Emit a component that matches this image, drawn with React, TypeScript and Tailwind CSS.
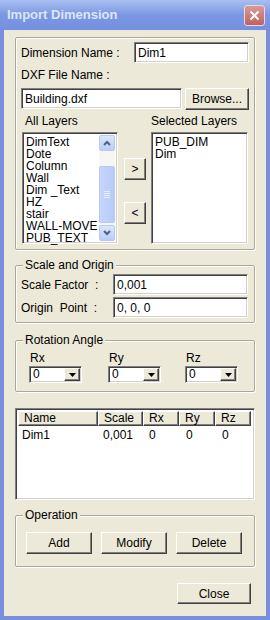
import React from 'react';

const sunken =
  'border border-t-[#808080] border-l-[#808080] border-r-white border-b-white shadow-[inset_1px_1px_0_#404040,inset_-1px_-1px_0_#d4d0c8] bg-white';
const raised =
  'border border-t-white border-l-white border-r-[#404040] border-b-[#404040] shadow-[inset_-1px_-1px_0_#808080] bg-[#ECE9D8]';
const etched =
  'relative rounded-[2px] border border-[#ACA899] shadow-[inset_1px_1px_0_#ffffff,1px_1px_0_#ffffff]';

const allLayers = ['DimText', 'Dote', 'Column', 'Wall', 'Dim _Text', 'HZ', 'stair', 'WALL-MOVE', 'PUB_TEXT'];
const selectedLayers = ['PUB_DIM', 'Dim'];

function Legend({ text }: { text: string }) {
  return (
    <span className="absolute left-[7px] top-[-8px] bg-[#ECE9D8] px-[2px] text-[12px] leading-[14px]">{text}</span>
  );
}

function Button({ label, className }: { label: string; className: string }) {
  return (
    <div className={`${raised} flex items-center justify-center text-[12px] ${className}`}>{label}</div>
  );
}

function Combo() {
  return (
    <div className={`${sunken} flex h-[17px] w-[53px] items-stretch p-[1px]`}>
      <span className="flex-1 pl-[2px] text-[12px] leading-[13px]">0</span>
      <div className={`${raised} flex w-[16px] items-center justify-center`}>
        <svg width="7" height="4" viewBox="0 0 7 4">
          <path d="M0 0h7L3.5 4z" fill="#000" />
        </svg>
      </div>
    </div>
  );
}

function ScrollArrow({ up }: { up?: boolean }) {
  return (
    <div className="flex h-[16px] items-center justify-center rounded-[2px] border border-[#B8CAF2] bg-gradient-to-b from-[#DCE6FD] to-[#B9CDF8]">
      <svg width="8" height="6" viewBox="0 0 8 6">
        <path d={up ? 'M1 5l3-3 3 3' : 'M1 1l3 3 3-3'} stroke="#4D6185" strokeWidth="2" fill="none" />
      </svg>
    </div>
  );
}

export default function App() {
  return (
    <div
      className="flex h-[620px] w-[270px] flex-col bg-[#7A8FDC] text-black"
      style={{ fontFamily: '"Liberation Sans", Arial, sans-serif' }}
    >
      {/* title bar */}
      <div className="flex h-[30px] items-center justify-between bg-gradient-to-b from-[#A9BFF1] via-[#7C97E2] to-[#7490E0] pl-[7px] pr-[5px]">
        <span className="text-[13px] font-bold text-[#DCE6F8]">Import Dimension</span>
        <div className="flex h-[21px] w-[21px] items-center justify-center rounded-[3px] border border-[#E8D8E4] bg-gradient-to-b from-[#D99A9A] to-[#C0605E]">
          <svg width="11" height="11" viewBox="0 0 11 11">
            <path d="M1.5 1.5l8 8M9.5 1.5l-8 8" stroke="#fff" strokeWidth="2" />
          </svg>
        </div>
      </div>

      <div className="mx-[4px] mb-[4px] flex flex-1 flex-col bg-[#ECE9D8] px-[11px] pt-[7px]">
        {/* file & layers */}
        <div className={`${etched} h-[213px] px-[5px] pt-[4px]`}>
          <div className="flex h-[21px] items-center">
            <span className="text-[12px]">Dimension Name :</span>
            <div className={`${sunken} ml-auto flex h-[21px] w-[115px] items-center px-[3px] text-[12px]`}>Dim1</div>
          </div>
          <div className="mt-[5px] h-[14px] text-[12px] leading-[14px]">DXF File Name :</div>
          <div className="mt-[6px] flex h-[22px] items-start gap-[3px]">
            <div className={`${sunken} flex h-[21px] w-[161px] items-center px-[3px] text-[12px]`}>Building.dxf</div>
            <Button label="Browse..." className="h-[22px] w-[64px]" />
          </div>
          <div className="mt-[4px] flex h-[14px] text-[12px] leading-[14px]">
            <span className="w-[130px] pl-[4px]">All Layers</span>
            <span>Selected Layers</span>
          </div>
          <div className="ml-[1px] mt-[4px] flex h-[112px]">
            <div className={`${sunken} flex w-[96px] p-[2px]`}>
              <div className="flex-1 pl-[1px] pt-[1px] text-[12px] leading-[12px]">
                {allLayers.map((l) => (
                  <div key={l} className="whitespace-nowrap">{l}</div>
                ))}
              </div>
              <div className="flex w-[16px] flex-col bg-[#F7F6F0]">
                <ScrollArrow up />
                <div className="flex flex-1 flex-col pt-[15px] pb-[2px]">
                  <div className="flex flex-1 items-center justify-center rounded-[2px] border border-[#B8CAF2] bg-gradient-to-r from-[#C6D5FB] to-[#B8CBF7]">
                    <div className="flex flex-col gap-[1px]">
                      <div className="h-[1px] w-[6px] bg-[#E8EEFD]" />
                      <div className="h-[1px] w-[6px] bg-[#E8EEFD]" />
                      <div className="h-[1px] w-[6px] bg-[#E8EEFD]" />
                      <div className="h-[1px] w-[6px] bg-[#E8EEFD]" />
                    </div>
                  </div>
                </div>
                <ScrollArrow />
              </div>
            </div>
            <div className="ml-[6px] flex w-[22px] flex-col pt-[26px]">
              <Button label=">" className="h-[22px] w-[22px]" />
              <Button label="<" className="mt-[22px] h-[22px] w-[22px]" />
            </div>
            <div className={`${sunken} ml-[5px] w-[97px] px-[3px] pt-[3px] text-[12px] leading-[12px]`}>
              {selectedLayers.map((l) => (
                <div key={l}>{l}</div>
              ))}
            </div>
          </div>
        </div>

        {/* scale and origin */}
        <div className={`${etched} mt-[15px] h-[58px] pl-[5px] pr-[6px] pt-[8px]`}>
          <Legend text="Scale and Origin" />
          <div className="flex h-[21px] items-center">
            <span className="text-[12px]">Scale Factor&nbsp; :</span>
            <div className={`${sunken} ml-auto flex h-[21px] w-[135px] items-center px-[3px] text-[12px]`}>0,001</div>
          </div>
          <div className="mt-[2px] flex h-[21px] items-center">
            <span className="whitespace-pre text-[12px]">Origin  Point  :</span>
            <div className={`${sunken} ml-auto flex h-[21px] w-[135px] items-center px-[3px] text-[12px]`}>0, 0, 0</div>
          </div>
        </div>

        {/* rotation */}
        <div className={`${etched} mt-[17px] flex h-[52px] pl-[13px] pt-[10px]`}>
          <Legend text="Rotation Angle" />
          {['Rx', 'Ry', 'Rz'].map((r, i) => (
            <div key={r} className={`flex flex-col ${i === 0 ? '' : i === 1 ? 'ml-[26px]' : 'ml-[24px]'}`}>
              <span className="h-[14px] pl-[1px] text-[12px] leading-[14px]">{r}</span>
              <div className="mt-[1px]">
                <Combo />
              </div>
            </div>
          ))}
        </div>

        {/* list view */}
        <div className={`${sunken} mt-[16px] h-[92px] w-[240px] p-[2px] text-[12px]`}>
          <div className="flex h-[15px] leading-[13px]">
            {[
              ['Name', 'w-[80px]'],
              ['Scale', 'w-[45px]'],
              ['Rx', 'w-[36px]'],
              ['Ry', 'w-[36px]'],
              ['Rz', 'w-[36px]'],
            ].map(([h, w]) => (
              <div key={h} className={`${raised} ${w} pl-[5px]`}>{h}</div>
            ))}
          </div>
          <div className="mt-[2px] flex leading-[14px]">
            <span className="w-[80px] pl-[4px]">Dim1</span>
            <span className="w-[45px] pl-[5px]">0,001</span>
            <span className="w-[36px] pl-[6px]">0</span>
            <span className="w-[36px] pl-[7px]">0</span>
            <span className="w-[36px] pl-[7px]">0</span>
          </div>
        </div>

        {/* operation */}
        <div className={`${etched} mt-[15px] flex h-[52px] gap-[9px] pl-[10px] pt-[16px]`}>
          <Legend text="Operation" />
          <Button label="Add" className="h-[22px] w-[66px]" />
          <Button label="Modify" className="h-[22px] w-[66px]" />
          <Button label="Delete" className="h-[22px] w-[66px]" />
        </div>

        <div className="mt-[16px] flex justify-end pr-[4px]">
          <Button label="Close" className="h-[21px] w-[74px]" />
        </div>
      </div>
    </div>
  );
}
